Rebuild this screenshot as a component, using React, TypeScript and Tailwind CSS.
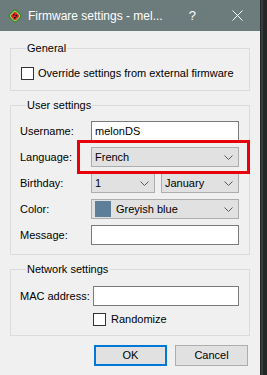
import React from "react";

const font = { fontFamily: '"Liberation Sans", Arial, sans-serif' };

function Chevron() {
  return (
    <svg width="9" height="5" viewBox="0 0 9 5" className="shrink-0">
      <path d="M0.5 0.5 L4.5 4.5 L8.5 0.5" fill="none" stroke="#5a5a5a" strokeWidth="1" />
    </svg>
  );
}

function Melon() {
  return (
    <svg width="16" height="16" viewBox="0 0 16 16">
      <rect x="2.6" y="2.6" width="10.8" height="10.8" rx="2.5" transform="rotate(45 8 8)" fill="#3a8f2a" />
      <rect x="3.8" y="3.8" width="8.4" height="8.4" rx="2" transform="rotate(45 8 8)" fill="#9be07a" />
      <rect x="4.6" y="4.6" width="6.8" height="6.8" rx="1.5" transform="rotate(45 8 8)" fill="#e52424" />
      <rect x="6" y="6" width="1.5" height="1.5" fill="#111" />
      <rect x="8.5" y="7" width="1.5" height="1.5" fill="#111" />
      <rect x="7" y="9" width="1.5" height="1.5" fill="#111" />
    </svg>
  );
}

function Checkbox() {
  return <span className="block h-[13px] w-[13px] shrink-0 border border-[#333] bg-white" />;
}

function Select({ children, className = "" }: { children: React.ReactNode; className?: string }) {
  return (
    <div className={`flex h-[20px] items-center justify-between border border-[#adadad] bg-[#e1e1e1] pl-[3px] pr-[5px] ${className}`}>
      <div className="flex items-center gap-[5px] whitespace-nowrap">{children}</div>
      <Chevron />
    </div>
  );
}

function Group({ title, children, className = "" }: { title: string; children: React.ReactNode; className?: string }) {
  return (
    <fieldset className={`border border-[#dcdcdc] pl-[9px] pr-[10px] ${className}`}>
      <legend className="ml-[6px] px-[1px] text-[11px] leading-[14px]">{title}</legend>
      {children}
    </fieldset>
  );
}

export default function App() {
  return (
    <div className="flex h-[375px] w-[267px] overflow-hidden bg-[#262626] text-[11px] text-black" style={font}>
      <div className="flex w-[260px] flex-col bg-[#f0f0f0]">
        <div className="flex h-[31px] shrink-0 items-center bg-[#6c7b7b] text-white">
          <div className="ml-[7px] mr-[5px]">
            <Melon />
          </div>
          <span className="whitespace-nowrap text-[12px]">Firmware settings - mel...</span>
          <span className="ml-auto mr-[36px] text-[13px]">?</span>
          <svg width="11" height="11" viewBox="0 0 11 11" className="mr-[17px]">
            <path d="M0.5 0.5 L10.5 10.5 M10.5 0.5 L0.5 10.5" stroke="white" strokeWidth="1" />
          </svg>
        </div>

        <div className="flex flex-col px-[10px]">
          <Group title="General" className="mt-[10px] pb-[9px]">
            <label className="mt-[10px] flex h-[16px] items-center gap-[4px] whitespace-nowrap pl-[1px]">
              <Checkbox />
              <span>Override settings from external firmware</span>
            </label>
          </Group>

          <Group title="User settings" className="relative mt-[7px] pb-[9px]">
            <div className="mt-[9px] flex flex-col gap-[6px]">
              <div className="flex items-center">
                <span className="w-[71px] whitespace-nowrap">Username:</span>
                <div className="flex h-[20px] flex-1 items-center border border-[#7a7a7a] bg-white px-[3px]">melonDS</div>
              </div>
              <div className="relative flex items-center">
                <span className="w-[71px] whitespace-nowrap">Language:</span>
                <Select className="flex-1">French</Select>
                <div className="absolute left-[57px] right-[-11px] top-[-7px] bottom-[-7px] border-[3px] border-[#e8000b]" />
              </div>
              <div className="flex items-center">
                <span className="w-[71px] whitespace-nowrap">Birthday:</span>
                <Select className="w-[64px]">1</Select>
                <Select className="ml-[6px] flex-1">January</Select>
              </div>
              <div className="flex items-center">
                <span className="w-[71px] whitespace-nowrap">Color:</span>
                <Select className="flex-1">
                  <span className="block h-[16px] w-[16px] bg-[#5e7f99]" />
                  <span>Greyish blue</span>
                </Select>
              </div>
              <div className="flex items-center">
                <span className="w-[71px] whitespace-nowrap">Message:</span>
                <div className="h-[20px] flex-1 border border-[#7a7a7a] bg-white" />
              </div>
            </div>
          </Group>

          <Group title="Network settings" className="mt-[7px] pb-[8px]">
            <div className="mt-[10px] flex items-center">
              <span className="w-[73px] whitespace-nowrap">MAC address:</span>
              <div className="h-[20px] flex-1 border border-[#7a7a7a] bg-white" />
            </div>
            <label className="ml-[73px] mt-[5px] flex h-[16px] items-center gap-[5px] whitespace-nowrap">
              <Checkbox />
              <span>Randomize</span>
            </label>
          </Group>
        </div>

        <div className="mr-[12px] mt-[9px] flex justify-end gap-[8px]">
          <button className="h-[21px] w-[73px] border-2 border-[#0078d7] bg-[#e1e1e1] text-[11px]">OK</button>
          <button className="h-[21px] w-[73px] border border-[#adadad] bg-[#e1e1e1] text-[11px]">Cancel</button>
        </div>
      </div>
      <div className="ml-[1px] w-[2px] bg-[#34403f]" />
    </div>
  );
}
